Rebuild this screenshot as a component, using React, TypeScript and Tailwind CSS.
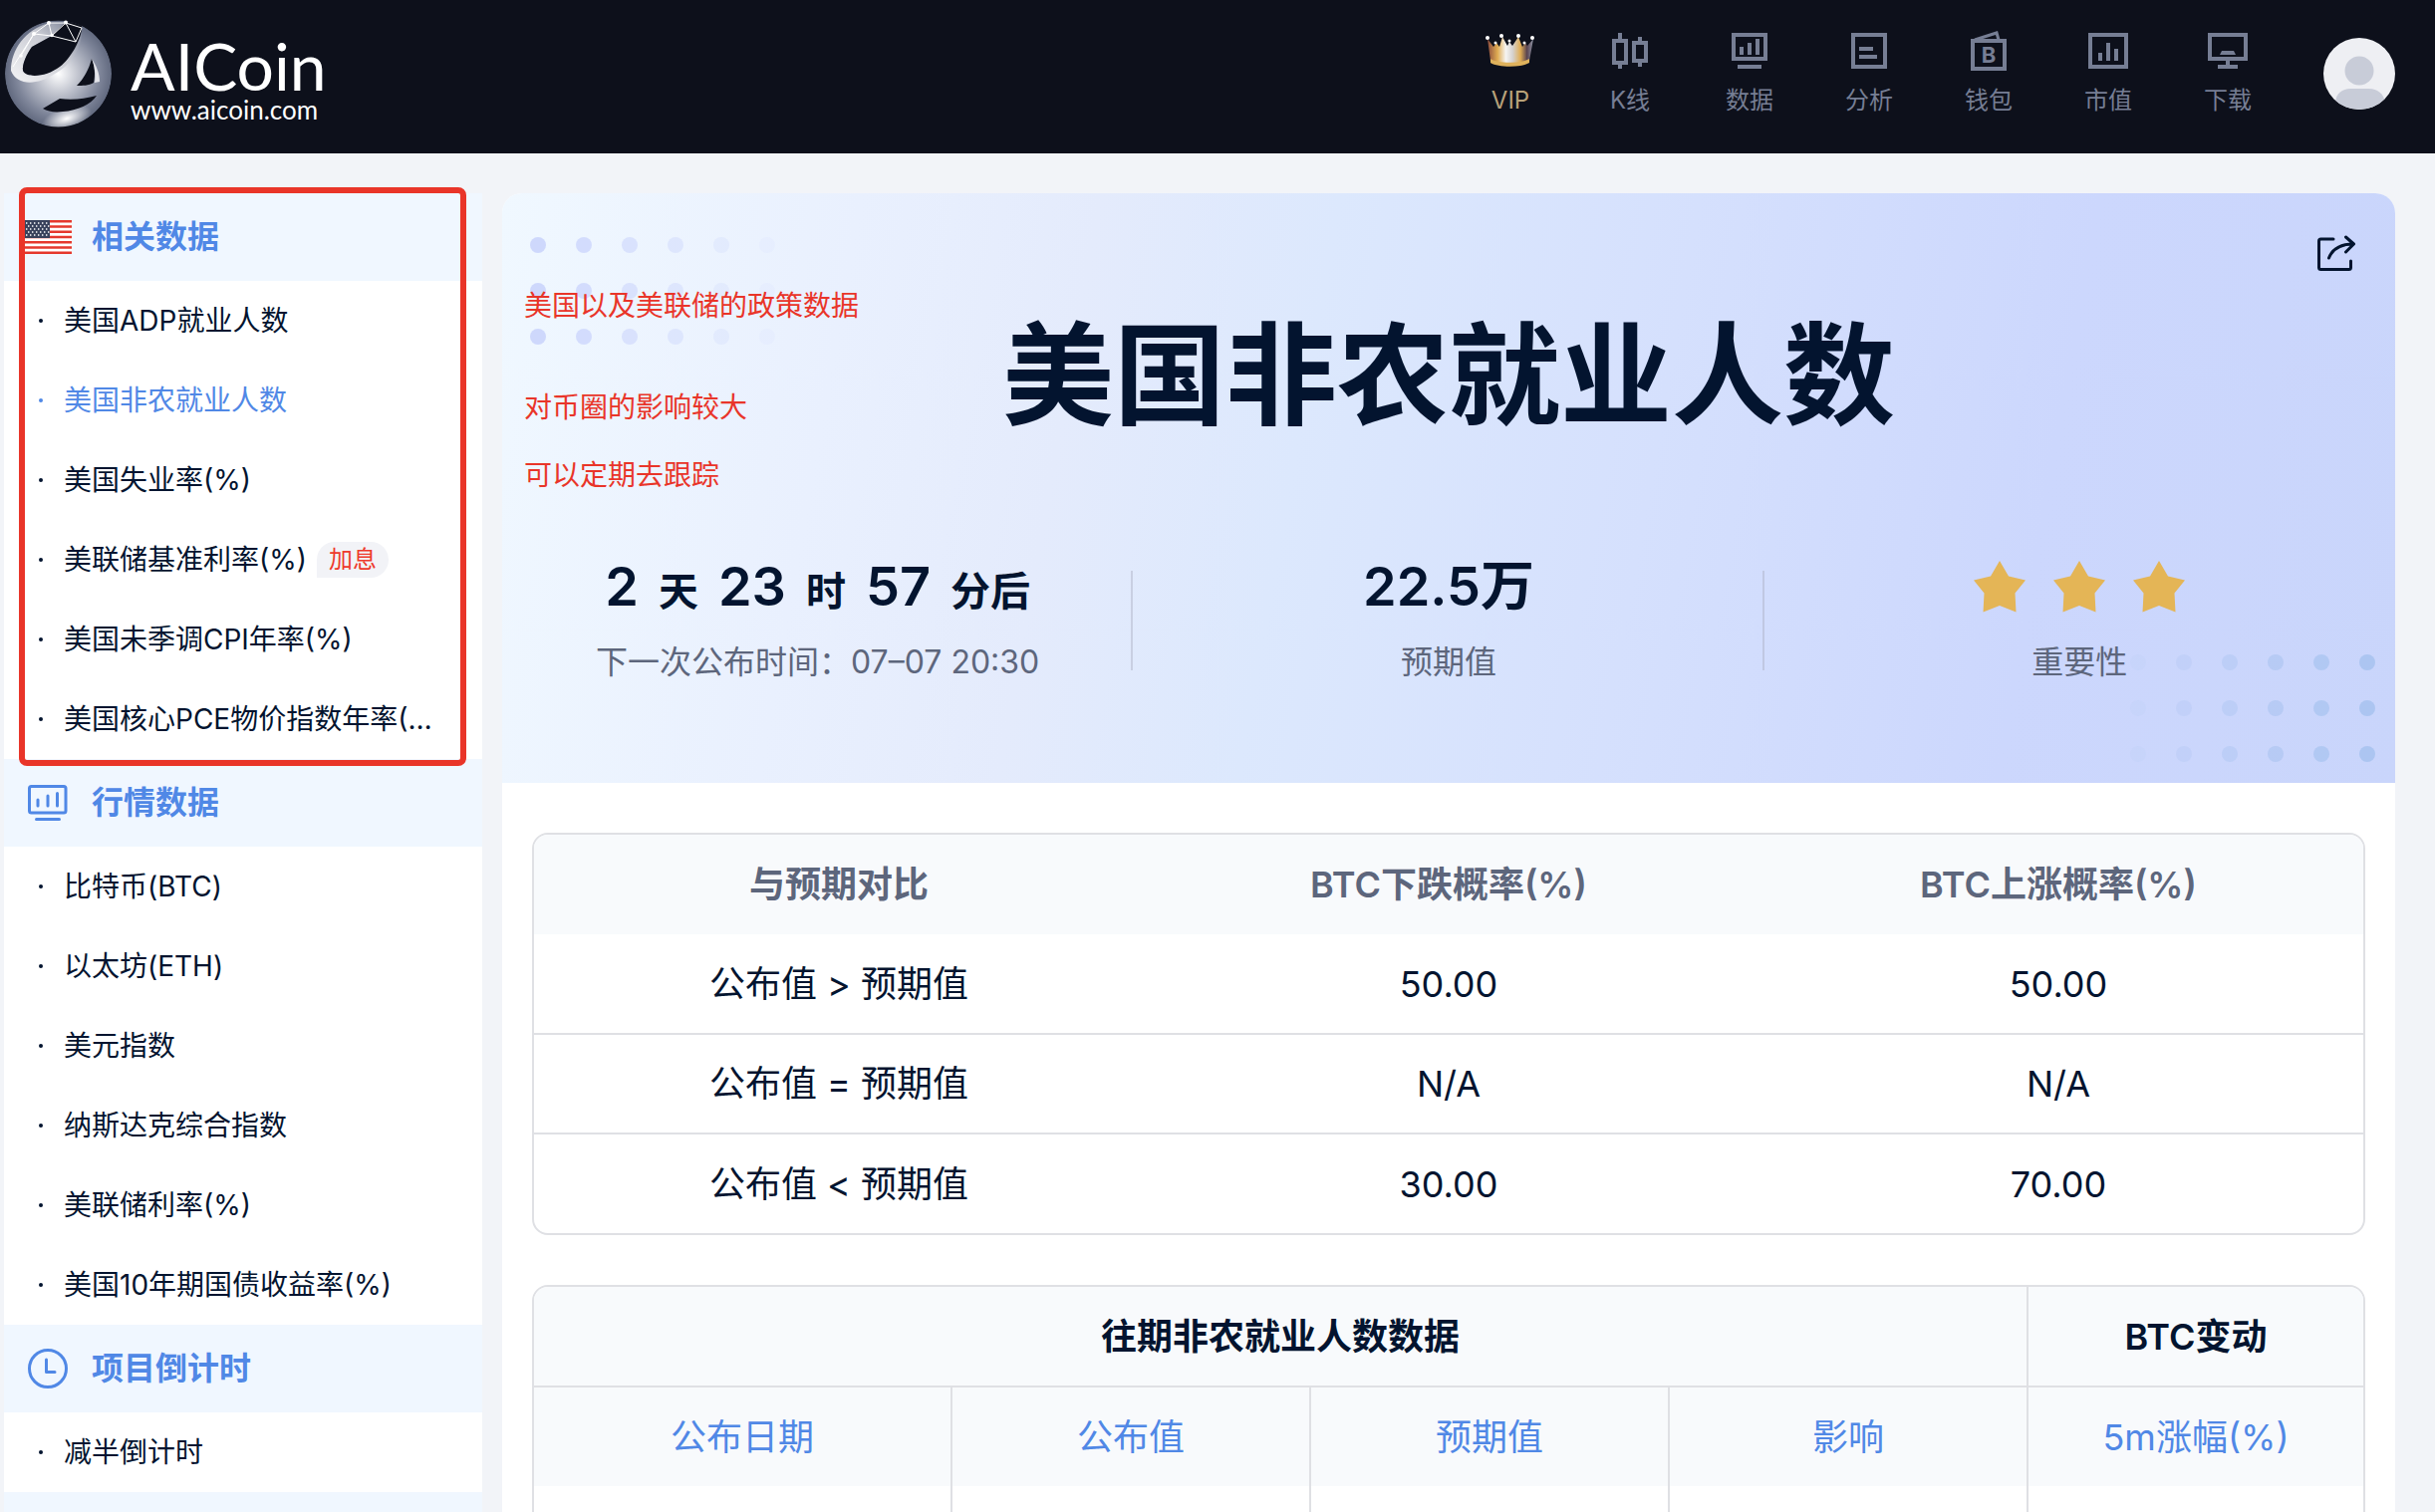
import React from "react";

interface NavItem {
  label: string;
  icon: React.ReactNode;
  gold?: boolean;
}

interface MenuItem {
  label: string;
  active?: boolean;
  tag?: string;
}

interface MenuGroup {
  title: string;
  icon: React.ReactNode;
  items: MenuItem[];
}

const Logo = () => (
  <svg className="size-[108px] shrink-0" viewBox="0 0 108 108" aria-hidden="true">
    <defs>
      <radialGradient id="ball" cx="0.5" cy="0.5" r="0.52">
        <stop offset="0" stopColor="#ffffff" />
        <stop offset="0.35" stopColor="#c3c6d0" />
        <stop offset="0.75" stopColor="#7f869a" />
        <stop offset="1" stopColor="#5c647a" />
      </radialGradient>
      <radialGradient id="shine" cx="0.5" cy="0.5" r="0.5">
        <stop offset="0" stopColor="#ffffff" />
        <stop offset="1" stopColor="#ffffff" stopOpacity="0" />
      </radialGradient>
      <linearGradient id="rim" x1="0" y1="1" x2="1" y2="0">
        <stop offset="0" stopColor="#f4f4f6" />
        <stop offset="0.6" stopColor="#c9cbd3" />
        <stop offset="1" stopColor="#6c748a" />
      </linearGradient>
      <clipPath id="ballClip">
        <circle cx="53.5" cy="54" r="53.5" />
      </clipPath>
    </defs>
    <g clipPath="url(#ballClip)">
      <circle cx="53.5" cy="54" r="53.5" fill="url(#ball)" />
      <path
        d="M6 51C6 30 20 10 44 3L61 3 47 16 27 27C22 34 17 45 18 51C21 57 38 60 55 47C65 39 72 30 77 9C78 24 69 44 50 54C32 66 12 66 6 51Z"
        fill="url(#rim)"
      />
      <ellipse cx="62" cy="99" rx="26" ry="12" fill="url(#shine)" transform="rotate(-18 62 99)" />
      <path d="M18 51C17 44 22 34 27 27L47 16 61 2 77 0V9C76 20 66 39 55 47C42 57 22 59 18 51Z" fill="#0d101b" />
      <path d="M87 39C90 46 91 55 89 63C84 66 78 66 72 66C79 59 84 50 87 39Z" fill="#0d101b" />
      <path d="M87 39C92 46 95 54 95 62L90 63C91 55 90 46 87 39Z" fill="#e3e4e9" />
      <path d="M38 89L55 79C68 81 80 79 92 76C86 85 73 91 58 92C50 93 43 92 38 89Z" fill="#0d101b" />
    </g>
    <path d="M16 36L29 14 44 3H61L77 8 71 22 47 16 29 14M44 3L47 16 61 3 71 22M29 14L8 47" fill="none" stroke="#ffffff" strokeWidth="1" />
    <g fill="#ffffff">
      <circle cx="44" cy="3" r="2" />
      <circle cx="61" cy="2.5" r="2" />
      <circle cx="47" cy="15.5" r="1.8" />
      <circle cx="29" cy="14" r="2" />
      <circle cx="16" cy="36" r="1.8" />
    </g>
  </svg>
);

const CrownIcon = () => (
  <svg className="h-10 w-[50px]" viewBox="0 0 50 40" aria-hidden="true">
    <defs>
      <linearGradient id="crown" x1="0" x2="1">
        <stop offset="0" stopColor="#8a4a3c" />
        <stop offset="0.22" stopColor="#e0ac52" />
        <stop offset="0.4" stopColor="#f6f4f1" />
        <stop offset="0.55" stopColor="#d5d2d0" />
        <stop offset="0.72" stopColor="#e0ac52" />
        <stop offset="0.86" stopColor="#5a4450" />
        <stop offset="1" stopColor="#8f96a8" />
      </linearGradient>
    </defs>
    <path d="M2 8L8 16 11 12 14 16 17 6 22 15 24 11 27 15 33 6 37 16 40 12 42 15 48 8 44 30C36 36 13 36 5 30Z" fill="url(#crown)" />
    <path d="M5 28C13 33 36 33 44 28L44 32C36 37 13 37 5 32Z" fill="#dfb25c" />
    <g fill="#ffffff">
      <circle cx="2" cy="7" r="2" />
      <circle cx="16" cy="5" r="2" />
      <circle cx="33" cy="5" r="2" />
      <circle cx="47" cy="7" r="2" />
      <circle cx="10" cy="12" r="1.5" />
      <circle cx="24" cy="10" r="1.5" />
      <circle cx="39" cy="12" r="1.5" />
    </g>
  </svg>
);

const Glyph = ({ children }: { children: React.ReactNode }) => (
  <svg className="size-10" viewBox="0 0 40 40" fill="none" stroke="currentColor" strokeWidth="4" aria-hidden="true">
    {children}
  </svg>
);

const navItems: NavItem[] = [
  { label: "VIP", icon: <CrownIcon />, gold: true },
  {
    label: "K线",
    icon: (
      <Glyph>
        <path d="M4 10h12v22H4zM10 2v8M10 32v6M24 12h12v18H24zM30 6v6M30 30v6" />
      </Glyph>
    ),
  },
  {
    label: "数据",
    icon: (
      <Glyph>
        <path d="M4 4h32v24H4zM12 16v8M20 12v12M28 8v16M8 36h24" />
      </Glyph>
    ),
  },
  {
    label: "分析",
    icon: (
      <Glyph>
        <path d="M4 4h32v32H4zM10 18h14M10 26h18" />
      </Glyph>
    ),
  },
  {
    label: "钱包",
    icon: (
      <Glyph>
        <path d="M4 10h32v28H4z" />
        <path d="M6 9L28 2L30 9" strokeWidth="3" />
        <text x="20" y="32" textAnchor="middle" fill="currentColor" stroke="none" className="font-[Inter] text-[22px] font-bold">
          B
        </text>
      </Glyph>
    ),
  },
  {
    label: "市值",
    icon: (
      <Glyph>
        <path d="M2 4h36v32H2zM12 22v8M20 12v18M28 18v12" />
      </Glyph>
    ),
  },
  {
    label: "下载",
    icon: (
      <Glyph>
        <path d="M2 4h36v24H2zM20 28v8M10 36h20" />
        <path d="M14 20h12l2 4H12z" fill="currentColor" stroke="none" />
      </Glyph>
    ),
  },
];

const FlagIcon = () => (
  <svg className="h-[34px] w-12" viewBox="0 0 48 34" aria-hidden="true">
    <rect width="48" height="34" fill="#ffffff" />
    <path
      d="M0 1.3H48M0 6.5H48M0 11.8H48M0 17H48M0 22.2H48M0 27.5H48M0 32.7H48"
      stroke="#e5382d"
      strokeWidth="2.6"
    />
    <rect width="26" height="18" fill="#39425c" />
    <path
      d="M2 3H26M4 6H26M2 9H26M4 12H26M2 15H26"
      stroke="#ffffff"
      strokeWidth="1.4"
      strokeDasharray="1.4 2.6"
    />
  </svg>
);

const MarketIcon = () => (
  <svg className="size-10" viewBox="0 0 40 40" fill="none" stroke="currentColor" strokeWidth="3" strokeLinecap="round" aria-hidden="true">
    <rect x="1.5" y="3.5" width="36.5" height="26.5" rx="2" />
    <path d="M10 17v6M20 13v10M29.5 10.5v12.5M8.5 36.5h23" />
  </svg>
);

const ClockIcon = () => (
  <svg className="size-10" viewBox="0 0 40 40" fill="none" stroke="currentColor" strokeWidth="3" strokeLinecap="round" aria-hidden="true">
    <circle cx="20" cy="20" r="18.5" />
    <path d="M18.5 11v12.5H27" strokeLinejoin="round" />
  </svg>
);

const menu: MenuGroup[] = [
  {
    title: "相关数据",
    icon: <FlagIcon />,
    items: [
      { label: "美国ADP就业人数" },
      { label: "美国非农就业人数", active: true },
      { label: "美国失业率(%)" },
      { label: "美联储基准利率(%)", tag: "加息" },
      { label: "美国未季调CPI年率(%)" },
      { label: "美国核心PCE物价指数年率(%)" },
    ],
  },
  {
    title: "行情数据",
    icon: <MarketIcon />,
    items: [
      { label: "比特币(BTC)" },
      { label: "以太坊(ETH)" },
      { label: "美元指数" },
      { label: "纳斯达克综合指数" },
      { label: "美联储利率(%)" },
      { label: "美国10年期国债收益率(%)" },
    ],
  },
  {
    title: "项目倒计时",
    icon: <ClockIcon />,
    items: [{ label: "减半倒计时" }],
  },
];

const notes = ["美国以及美联储的政策数据", "对币圈的影响较大", "可以定期去跟踪"];

const rates = [
  ["公布值 > 预期值", "50.00", "50.00"],
  ["公布值 = 预期值", "N/A", "N/A"],
  ["公布值 < 预期值", "30.00", "70.00"],
];

const Header = () => (
  <header className="flex h-[154px] shrink-0 items-center justify-between bg-[#0d101b] pr-10 pb-[6px] pl-[5px]">
    <a href="#" className="flex items-center gap-[18px] font-[Lato] text-white">
      <Logo />
      <div className="flex flex-col pt-3">
        <span className="text-[66px] leading-[60px]">AICoin</span>
        <span className="text-[26px] leading-7">www.aicoin.com</span>
      </div>
    </a>
    <div className="flex items-center gap-9">
      <nav className="flex">
        {navItems.map((item) => (
          <a
            key={item.label}
            href="#"
            className={`flex w-[120px] flex-col items-center gap-3.5 text-2xl leading-8 ${
              item.gold ? "text-[#b8a27a]" : "text-[#767e94]"
            }`}
          >
            {item.icon}
            {item.label}
          </a>
        ))}
      </nav>
      <button type="button" aria-label="账户" className="size-[72px] overflow-hidden rounded-full bg-[#eeeff3]">
        <svg viewBox="0 0 72 72" fill="#c8ccd8" aria-hidden="true">
          <circle cx="36" cy="33" r="14.5" />
          <path d="M12 64C13 56 19 51 27 51H46C54 51 60 56 62 64V72H12Z" />
        </svg>
      </button>
    </div>
  </header>
);

const Sidebar = () => (
  <aside className="relative w-[480px] shrink-0">
    {menu.map((group) => (
      <section key={group.title}>
        <h2 className="flex h-[88px] items-center gap-5 bg-[#f0f7ff] px-5 text-[32px] font-bold text-[#5088e6]">
          <span className="flex w-12 justify-center">{group.icon}</span>
          {group.title}
        </h2>
        <ul className="bg-white">
          {group.items.map((item) => (
            <li key={item.label} className={item.active ? "text-[#5088e6]" : "text-[#03142f]"}>
              <a href="#" className="flex h-20 items-center pr-11 pl-[35px] text-[28px]">
                <span className="mr-[21px] size-1 shrink-0 rounded-full bg-current" />
                <span className="truncate">{item.label}</span>
                {item.tag && (
                  <span className="ml-2.5 h-9 shrink-0 rounded-full rounded-bl-none bg-[#f2f3f7] px-3 text-2xl leading-9 text-[#ee3a2c]">
                    {item.tag}
                  </span>
                )}
              </a>
            </li>
          ))}
        </ul>
      </section>
    ))}
    <div className="h-[88px] bg-[#f0f7ff]" />
    {/* highlight frame over the first group */}
    <div className="pointer-events-none absolute top-[-6px] left-[15px] h-[581px] w-[449px] rounded-lg border-6 border-[#e93529]" />
  </aside>
);

const Dots = ({ side }: { side: "left" | "right" }) => (
  <svg
    className={side === "left" ? "absolute top-11 left-7 h-[108px] w-[246px]" : "absolute right-5 bottom-[21px] h-[108px] w-[246px]"}
    viewBox="0 0 246 108"
    fill={side === "left" ? "#c8d2fc" : "#a9c3f0"}
    aria-hidden="true"
  >
    {[0, 1, 2].map((row) =>
      [0, 1, 2, 3, 4, 5].map((col) => (
        <circle
          key={`${row}-${col}`}
          cx={8 + col * 46}
          cy={8 + row * 46}
          r="8"
          opacity={side === "left" ? 0.85 - col * 0.15 : 0.1 + col * 0.16}
        />
      ))
    )}
  </svg>
);

const Star = () => (
  <svg className="size-[52px]" viewBox="0 0 52 52" fill="#e4b556" aria-hidden="true">
    <path d="M26 0L35 15.5 52 19.5 41.5 32.5 42.5 51.5 26 45 9.5 51.5 10.5 32.5 0 19.5 17 15.5Z" />
  </svg>
);

const Hero = () => (
  <section className="relative rounded-t-[20px] bg-[linear-gradient(100deg,#f0f8ff_0%,#e9f0fe_18%,#e4ebfc_30%,#dce8fd_42%,#d5e0fd_60%,#ccd7fd_80%,#c9d5fb_100%)] pt-[103px] pb-[97px]">
    <Dots side="left" />
    <Dots side="right" />
    <button type="button" aria-label="分享" className="absolute top-[41px] right-[39px] text-[#03142f]">
      <svg className="size-10" viewBox="0 0 40 40" fill="none" stroke="currentColor" strokeWidth="3" strokeLinecap="round" strokeLinejoin="round">
        <path d="M17 5H4.500Q2.500 5 2.500 7V33.500Q2.500 35.500 4.500 35.500H32.500Q34.500 35.500 34.500 33.500V27" />
        <path d="M12.500 24C16 15 24 10 37 10M29.500 3L37.500 10 29.500 18" />
      </svg>
    </button>
    <div className="absolute top-[91px] left-[22px] flex flex-col text-[28px] leading-[44px] text-[#e93529]">
      <p className="mb-[58px]">{notes[0]}</p>
      <p className="mb-6">{notes[1]}</p>
      <p>{notes[2]}</p>
    </div>
    <h1 className="text-center text-[112px] leading-[160px] font-semibold text-[#03142f]">美国非农就业人数</h1>
    <div className="mt-[92px] grid grid-cols-3 text-center text-[#03142f]">
      <div className="relative">
        <p className="flex h-20 items-baseline justify-center gap-5 text-[54px] leading-[80px] font-semibold">
          2 <span className="text-[40px]">天</span> 23 <span className="text-[40px]">时</span> 57{" "}
          <span className="text-[40px]">分后</span>
        </p>
        <p className="mt-3 h-12 text-[32px] leading-[48px] text-[#5d667c]">下一次公布时间：07–07 20:30</p>
        <span className="absolute top-6 right-0 h-[100px] w-0.5 bg-[#c9cfe2]" />
      </div>
      <div className="relative">
        <p className="h-20 text-[54px] leading-[80px] font-semibold">22.5万</p>
        <p className="mt-3 h-12 text-[32px] leading-[48px] text-[#5d667c]">预期值</p>
        <span className="absolute top-6 right-0 h-[100px] w-0.5 bg-[#c0c8e2]" />
      </div>
      <div>
        <p className="flex h-20 items-center justify-center gap-7">
          <Star />
          <Star />
          <Star />
        </p>
        <p className="mt-3 h-12 text-[32px] leading-[48px] text-[#5d667c]">重要性</p>
      </div>
    </div>
  </section>
);

const RateTable = () => (
  <div className="overflow-hidden rounded-2xl border-2 border-[#dfe0e4]">
    <table className="w-full table-fixed text-center text-4xl text-[#03142f]">
      <thead className="bg-[#f8fafc] text-[#5d667c]">
        <tr className="h-[100px]">
          <th className="font-semibold">与预期对比</th>
          <th className="font-semibold">BTC下跌概率(%)</th>
          <th className="font-semibold">BTC上涨概率(%)</th>
        </tr>
      </thead>
      <tbody className="divide-y-2 divide-[#dfe0e4]">
        {rates.map((row) => (
          <tr key={row[0]} className="h-[100px]">
            {row.map((cell, i) => (
              <td key={i}>{cell}</td>
            ))}
          </tr>
        ))}
      </tbody>
    </table>
  </div>
);

const HistoryTable = () => (
  <div className="overflow-hidden rounded-2xl border-2 border-[#dfe0e4]">
    <table className="w-full table-fixed text-center text-4xl">
      <colgroup>
        <col className="w-[419px]" />
        <col className="w-[360px]" />
        <col className="w-[360px]" />
        <col className="w-[360px]" />
        <col />
      </colgroup>
      <thead className="bg-[#f8fafc]">
        <tr className="h-[100px] divide-x-2 divide-[#dfe0e4] border-b-2 border-[#dfe0e4] text-[#03142f]">
          <th colSpan={4} className="font-semibold">
            往期非农就业人数数据
          </th>
          <th className="font-semibold">BTC变动</th>
        </tr>
        <tr className="h-[100px] divide-x-2 divide-[#dfe0e4] text-[#5088e6]">
          <th className="font-normal">公布日期</th>
          <th className="font-normal">公布值</th>
          <th className="font-normal">预期值</th>
          <th className="font-normal">影响</th>
          <th className="font-normal">5m涨幅(%)</th>
        </tr>
      </thead>
      <tbody>
        <tr className="h-[100px] divide-x-2 divide-[#dfe0e4]">
          <td />
          <td />
          <td />
          <td />
          <td />
        </tr>
      </tbody>
    </table>
  </div>
);

export default function App() {
  return (
    <div className="flex h-screen flex-col overflow-hidden bg-[#f2f4f8] font-[Inter,'Noto_Sans_CJK_SC',sans-serif]">
      <Header />
      <div className="flex gap-5 pt-10 pr-10 pl-1">
        <Sidebar />
        <main className="min-w-0 flex-1 rounded-t-[20px] bg-white">
          <Hero />
          <div className="flex flex-col gap-[50px] px-[30px] py-[50px]">
            <RateTable />
            <HistoryTable />
          </div>
        </main>
      </div>
    </div>
  );
}
